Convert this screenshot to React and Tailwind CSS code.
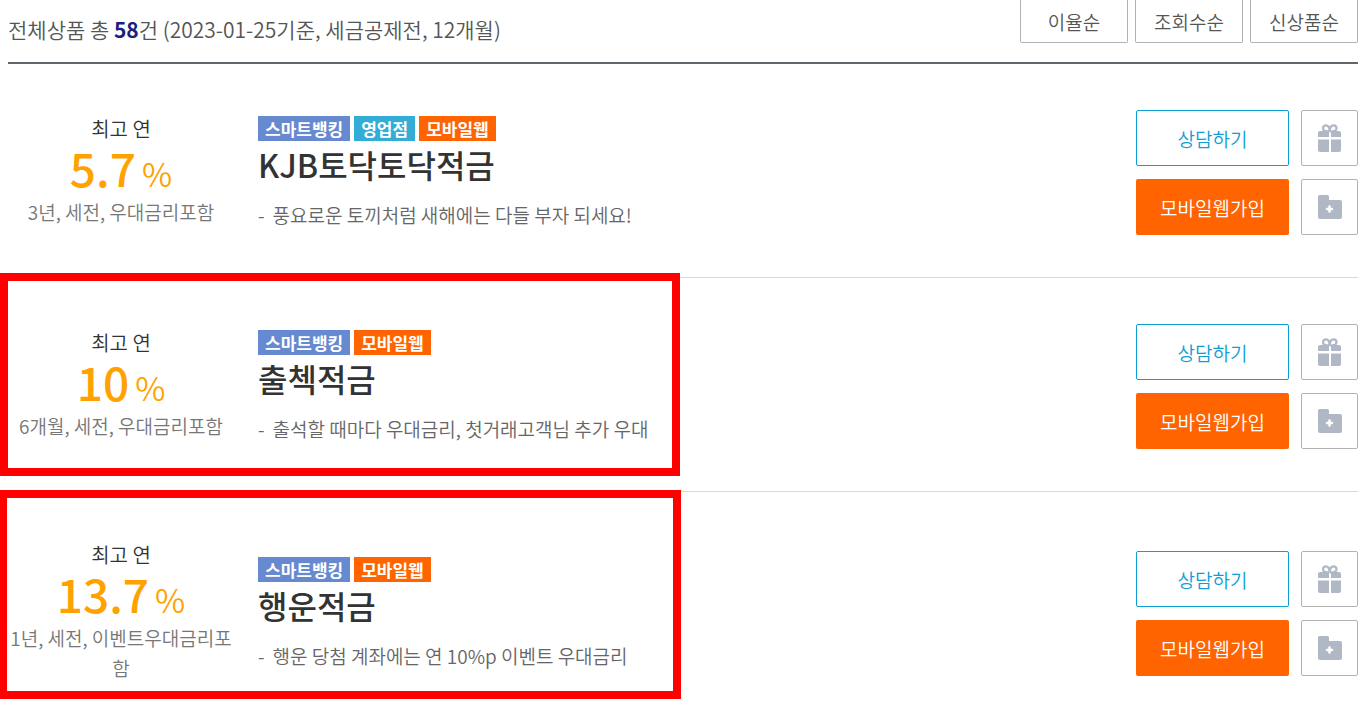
const sortOptions = ['이율순', '조회수순', '신상품순'];

const tagStyles = {
  스마트뱅킹: 'bg-[#6689cf]',
  영업점: 'bg-[#33acd6]',
  모바일웹: 'bg-[#ff6400]',
};

const products = [
  {
    name: 'KJB토닥토닥적금',
    rate: '5.7',
    condition: '3년, 세전, 우대금리포함',
    tags: ['스마트뱅킹', '영업점', '모바일웹'],
    description: '풍요로운 토끼처럼 새해에는 다들 부자 되세요!',
  },
  {
    name: '출첵적금',
    rate: '10',
    condition: '6개월, 세전, 우대금리포함',
    tags: ['스마트뱅킹', '모바일웹'],
    description: '출석할 때마다 우대금리, 첫거래고객님 추가 우대',
    highlight: '-top-[5px] -left-2 h-[203px] w-[680px]',
  },
  {
    name: '행운적금',
    rate: '13.7',
    condition: '1년, 세전, 이벤트우대금리포함',
    tags: ['스마트뱅킹', '모바일웹'],
    description: '행운 당첨 계좌에는 연 10%p 이벤트 우대금리',
    highlight: '-top-[2px] -left-[9px] h-[209px] w-[682px]',
  },
];

function GiftIcon() {
  return (
    <svg width="24" height="28" viewBox="0 0 24 28" fill="#b0b7c5" aria-hidden="true">
      <path d="M2 7h9v6H0V9a2 2 0 0 1 2-2zM13 7h8a2 2 0 0 1 2 2v4H13zM0 15.500h11V28H2a2 2 0 0 1-2-2zM13 15.500h10V26a2 2 0 0 1-2 2h-8z" />
      <path
        d="M11.500 7.500C7 7.500 5 6 5 4.200 5 2.500 6.300 1.300 8 1.300c2.300 0 3.500 2 3.700 6.200.2-4.200 1.500-6.200 3.800-6.200 1.700 0 3 1.200 3 2.900 0 1.800-2 3.300-6.500 3.300"
        fill="none"
        stroke="#b0b7c5"
        strokeWidth="2.200"
      />
    </svg>
  );
}

function FolderPlusIcon() {
  return (
    <svg width="24" height="24" viewBox="0 0 24 24" aria-hidden="true">
      <path
        d="M1.500 0h8a1.500 1.500 0 0 1 1.500 1.500V5h11a2 2 0 0 1 2 2v15a2 2 0 0 1-2 2H2a2 2 0 0 1-2-2V1.500A1.500 1.500 0 0 1 1.500 0z"
        fill="#b0b7c5"
      />
      <path d="M11.500 11.500v5M9 14h5" stroke="#fff" strokeWidth="2.500" strokeLinecap="round" />
    </svg>
  );
}

function IconButton({ label, children }) {
  return (
    <button
      type="button"
      aria-label={label}
      className="flex h-14 w-[57px] items-center justify-center rounded-xs border border-[#b3b3b3] bg-white"
    >
      {children}
    </button>
  );
}

function Product({ product }) {
  return (
    <li className="relative flex items-center border-b border-[#d9d9d9] pt-[46px] pb-[42px] last:border-b-0 last:pb-3">
      <div className="w-[226px] shrink-0 pt-[2px] pb-[6px] text-center">
        <p className="text-[20px] leading-[30px] text-[#333]">최고 연</p>
        <p className="mb-[6px] flex items-baseline justify-center gap-1.5 leading-[47px] text-[#ffa200]">
          <strong className="text-[46px] font-medium">{product.rate}</strong>
          <span className="text-[33px] leading-none">%</span>
        </p>
        <p className="text-[19px] leading-[30px] text-[#777]">{product.condition}</p>
      </div>

      <div className="ml-6 flex-1">
        <div className="flex gap-1">
          {product.tags.map((tag) => (
            <span
              key={tag}
              className={`px-[7px] text-[17px] leading-[25px] font-bold text-white ${tagStyles[tag]}`}
            >
              {tag}
            </span>
          ))}
        </div>
        <h2 className="text-[32px] leading-[46px] font-medium text-[#333]">{product.name}</h2>
        <p className="mt-3.5 flex gap-2 text-[19px] leading-7 text-[#666]">
          <span>-</span>
          <span>{product.description}</span>
        </p>
      </div>

      <div className="grid shrink-0 grid-cols-[153px_57px] gap-x-3 gap-y-[13px]">
        <button
          type="button"
          className="h-14 rounded-xs border border-[#0d9ed5] bg-white pt-0.5 text-[19px] text-[#0d9ed5]"
        >
          상담하기
        </button>
        <IconButton label="선물하기">
          <GiftIcon />
        </IconButton>
        <button type="button" className="h-14 rounded-xs bg-[#ff6400] pt-0.5 text-[19px] text-white">
          모바일웹가입
        </button>
        <IconButton label="보관함 담기">
          <FolderPlusIcon />
        </IconButton>
      </div>

      {product.highlight && (
        <div
          className={`pointer-events-none absolute border-8 border-[#ff0000] ${product.highlight}`}
        />
      )}
    </li>
  );
}

export default function App() {
  return (
    <main className="overflow-x-hidden bg-white pr-[9px] pl-2 font-['Noto_Sans_CJK_KR',sans-serif] font-[350]">
      <header className="flex items-start justify-between border-b-2 border-[#5f666c] pb-[19px]">
        <p className="pt-4 text-[21px] leading-[27px] text-[#555]">
          전체상품 총 <strong className="font-bold text-[#1d1f7c]">58</strong>건 (2023-01-25기준,
          세금공제전, 12개월)
        </p>
        <div className="flex gap-[7px]">
          {sortOptions.map((option) => (
            <button
              key={option}
              type="button"
              className="h-[43px] w-[108px] rounded-b-xs border border-t-0 border-[#b3b3b3] pt-0.5 text-[19px] text-[#555]"
            >
              {option}
            </button>
          ))}
        </div>
      </header>

      <ul>
        {products.map((product) => (
          <Product key={product.name} product={product} />
        ))}
      </ul>
    </main>
  );
}
